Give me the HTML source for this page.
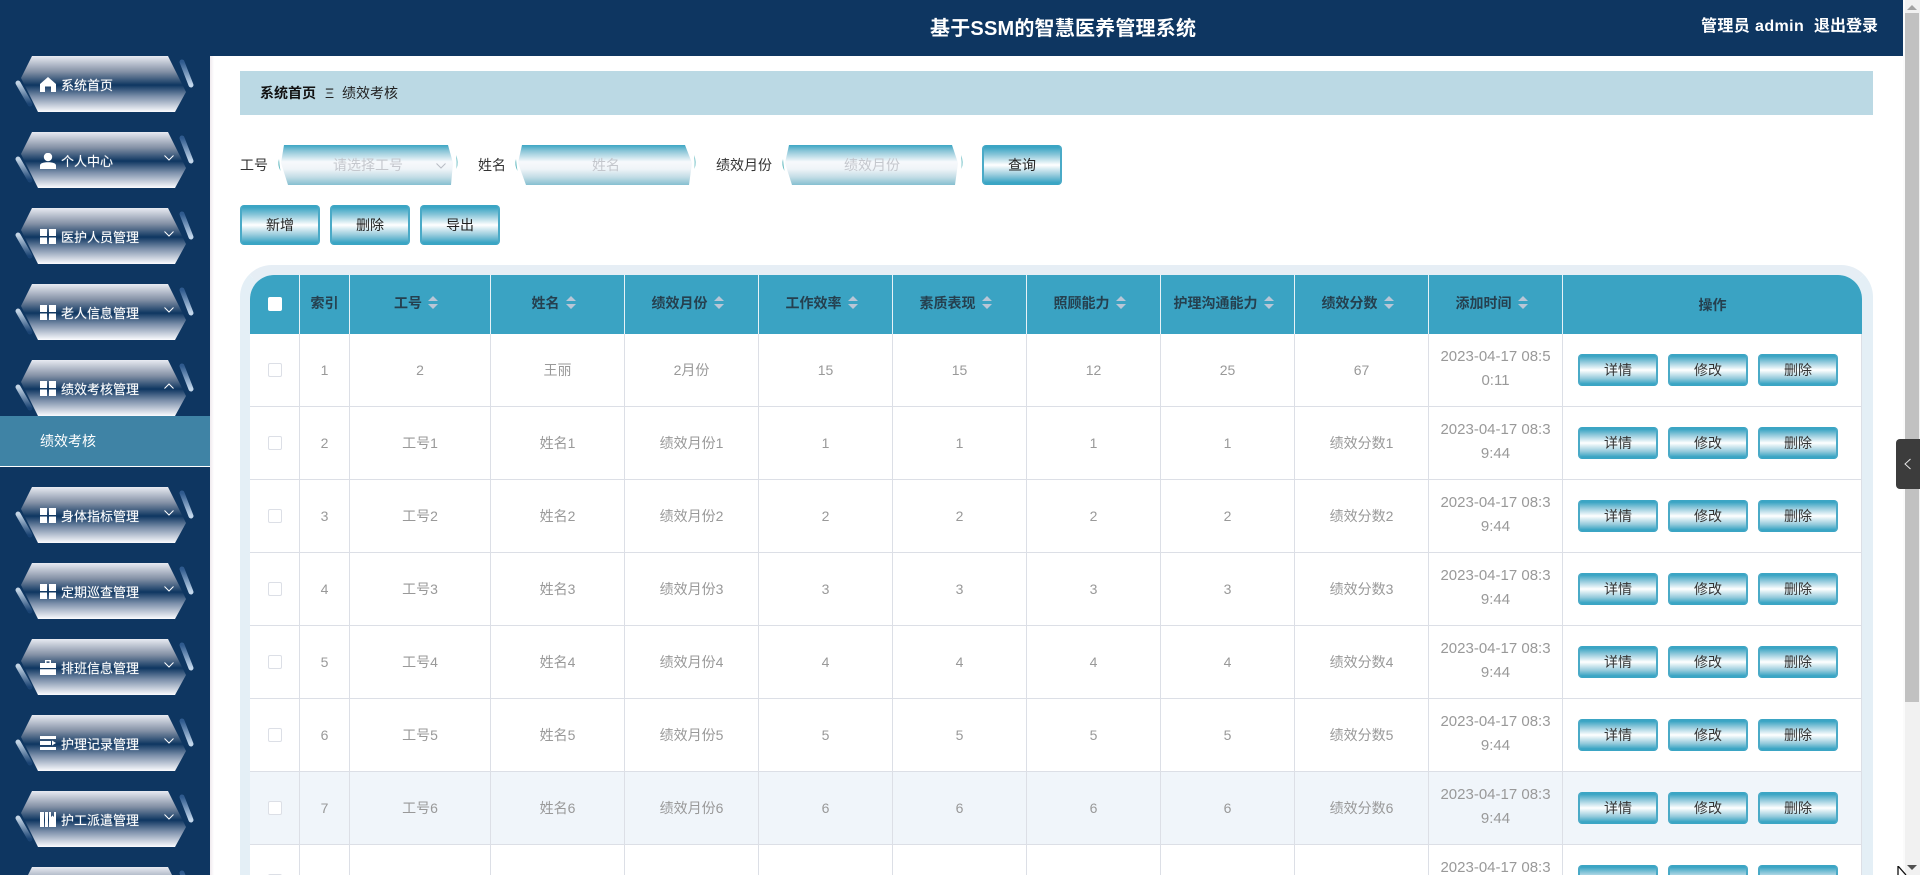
<!DOCTYPE html>
<html lang="zh-CN">
<head>
<meta charset="utf-8">
<title>基于SSM的智慧医养管理系统</title>
<style>
*{box-sizing:border-box;margin:0;padding:0}
html,body{width:1920px;height:875px;overflow:hidden;background:#fff}
body{position:relative;font-family:"Liberation Sans","Noto Sans CJK SC",sans-serif;font-size:14px;color:#333}
.abs{position:absolute}
#side{position:absolute;left:0;top:0;width:210px;height:875px;background:#0e3661;overflow:hidden}
#shadow{position:absolute;left:210px;top:56px;width:4px;height:819px;background:linear-gradient(90deg,#efe9ee,#fff)}
#head{position:absolute;left:0;top:0;width:1903px;height:56px;background:#0e3661}
#title{position:absolute;left:930px;top:14px;font-size:20px;line-height:30px;font-weight:bold;color:#fff;white-space:nowrap;letter-spacing:.2px}
#user{position:absolute;left:1701px;top:15px;font-size:16px;line-height:24px;font-weight:bold;color:#fff;white-space:nowrap;letter-spacing:.4px}
#logout{position:absolute;left:1814px;top:15px;font-size:16px;line-height:24px;font-weight:bold;color:#fff;white-space:nowrap}
.mi{position:absolute;left:0;width:210px;height:56px}
.mi svg.bg{position:absolute;left:0;top:0}
.mi .ic{position:absolute;left:40px;top:21px}
.mi .t{position:absolute;left:61px;top:20px;font-size:13px;line-height:20px;color:#fff;white-space:nowrap;text-shadow:0 0 1px rgba(255,255,255,.55)}
.mi .ch{position:absolute;left:164px;top:23px}
#sub{position:absolute;left:0;top:416px;width:210px;height:50px;background:#3f83a5;color:#fff;font-size:14px;line-height:51px;padding-left:40px}
#subl{position:absolute;left:0;top:466px;width:210px;height:1px;background:#fff}
#crumb{position:absolute;left:240px;top:71px;width:1633px;height:44px;background:#bbd9e4}
#crumb b{position:absolute;left:20px;top:12px;font-size:14px;line-height:20px;color:#111;white-space:nowrap}
#crumb i{position:absolute;left:85px;top:12px;font-style:normal;font-size:14px;line-height:20px;color:#222}
#crumb span{position:absolute;left:102px;top:12px;font-size:14px;line-height:20px;color:#222;white-space:nowrap}
.lab{position:absolute;top:155px;font-size:14px;line-height:20px;color:#333;white-space:nowrap}
.ph{position:absolute;top:155px;font-size:14px;line-height:20px;color:#c4c7cd;white-space:nowrap}
.btn{position:absolute;width:80px;border-left:2px solid #4aaac7;border-right:2px solid #4aaac7;background:linear-gradient(180deg,#3ba5c4 0%,#3ba5c4 6%,#8cc7da 25%,#fff 50%,#96cbdc 75%,#3ba5c4 94%,#3ba5c4 100%);border-radius:4px;text-align:center;color:#222;font-size:14px}
.b40{height:40px;line-height:40px;top:145px}
.b41{height:40px;line-height:40px;top:205px}
#wrap{position:absolute;left:240px;top:265px;width:1633px;height:610px;border-radius:32px 32px 0 0;border:10px solid #e4eff6;border-bottom:0;border-top-color:#e6eef5;background:#e4eff6;overflow:clip}
#tb{position:absolute;left:0;top:0;width:1612px;height:600px;background:#fff;border-radius:24px 24px 0 0;overflow:clip}
table{border-collapse:separate;border-spacing:0;table-layout:fixed;width:1612px}
th{height:59px;background:#3aa3c3;border-right:1px solid #e6f2f7;font-size:14px;font-weight:bold;color:#25404f;text-align:center;padding:0;vertical-align:middle}
th:last-child{border-right:0}
.up{position:relative;top:-2px}
td{height:73px;border-right:1px solid #dcdfe6;border-bottom:1px solid #dcdfe6;text-align:center;color:#999;font-size:14px;padding:0;vertical-align:middle}
td.d{font-size:15px;line-height:24px;white-space:nowrap;padding-bottom:2px}
tr.s td{background:#f0f5fa}
.cb{display:inline-block;width:14px;height:14px;border:1px solid #dcdfe6;border-radius:2px;background:#fff;vertical-align:middle;position:relative;top:-1px}
th .cb{border-color:#fff;top:-2px}
.srt{display:inline-flex;align-items:center;position:relative;left:-4px;top:-2px}
.srt svg{margin-left:6px}
.ops{text-align:left;position:relative}
.ops a{position:absolute;top:20px;width:80px;height:32px;line-height:32px;border-left:2px solid #4aaac7;border-right:2px solid #4aaac7;background:linear-gradient(180deg,#3ba5c4 0%,#3ba5c4 7%,#8cc7da 24%,#fff 50%,#96cbdc 76%,#3ba5c4 93%,#3ba5c4 100%);border-radius:4px;text-align:center;color:#333;font-size:14px}
.ops a:nth-child(1){left:15px}.ops a:nth-child(2){left:105px}.ops a:nth-child(3){left:195px}
#sbar{position:absolute;left:1903px;top:0;width:17px;height:875px;background:#f1f1f1;border-left:2px solid #fbfbfb}
#thumb{position:absolute;left:1905px;top:13px;width:14px;height:689px;background:#c1c1c1}
#tab{position:absolute;left:1896px;top:439px;width:24px;height:50px;background:#3c3c3c;border-radius:4px 0 0 4px}
</style>
</head>
<body>
<svg width="0" height="0" style="position:absolute">
<defs>
<linearGradient id="hex" x1="0" y1="0" x2="0" y2="1">
<stop offset="0" stop-color="#e8ebf2"/><stop offset=".28" stop-color="#8491a6"/><stop offset=".52" stop-color="#0e3661"/><stop offset=".72" stop-color="#7a8ea9"/><stop offset="1" stop-color="#fbfcfe"/>
</linearGradient>
<linearGradient id="ar" x1="0" y1="0" x2="0" y2="1"><stop offset="0" stop-color="#2f5a8e"/><stop offset="1" stop-color="#c4d8ec"/></linearGradient>
<linearGradient id="al" x1="0" y1="0" x2="0" y2="1"><stop offset="0" stop-color="#c4d5e6"/><stop offset="1" stop-color="#1a4373"/></linearGradient>
<linearGradient id="ig" x1="0" y1="0" x2="0" y2="1"><stop offset="0" stop-color="#3ca6c4"/><stop offset=".15" stop-color="#8cc6d8"/><stop offset=".42" stop-color="#f7f9fc"/><stop offset=".6" stop-color="#eff4f8"/><stop offset=".8" stop-color="#c4dde6"/><stop offset="1" stop-color="#85bfd0"/></linearGradient>
<symbol id="hexs" viewBox="0 0 210 56">
<path d="M32 0H168L186 36L175 56H38L21 22Z" fill="url(#hex)"/>
<path d="M182 6L191 29" stroke="url(#ar)" stroke-width="5" stroke-linecap="round" fill="none"/>
<path d="M18 27L30 48" stroke="url(#al)" stroke-width="5" stroke-linecap="round" fill="none"/>
</symbol>
<symbol id="down" viewBox="0 0 10 6"><path d="M.5.5L5 5L9.5.5" fill="none" stroke="#fff" stroke-width="1"/></symbol>
<symbol id="grid" viewBox="0 0 16 15"><path d="M0 0H7V7H0ZM9 0H16V7H9ZM0 8.500H7V15H0ZM9 8.500H16V15H9Z" fill="#fff"/></symbol>
<symbol id="srt" viewBox="0 0 10 13"><path d="M5 0L10 5H0ZM0 8H10L5 13Z" fill="#b9c6d6"/></symbol>
</defs>
</svg>

<div id="head"></div>
<div id="side"></div>
<div id="shadow"></div>
<div id="title">基于SSM的智慧医养管理系统</div>
<div id="user">管理员 admin</div>
<div id="logout">退出登录</div>

<div class="mi" style="top:56px"><svg class="bg" width="210" height="56"><use href="#hexs"/></svg>
<svg class="ic" width="16" height="15" viewBox="0 0 16 15"><path d="M8 0L16 7V15H11V9.500H5V15H0V7Z" fill="#fff"/></svg><span class="t">系统首页</span></div>

<div class="mi" style="top:132px"><svg class="bg" width="210" height="56"><use href="#hexs"/></svg>
<svg class="ic" width="16" height="16" viewBox="0 0 16 16"><circle cx="8" cy="4" r="4.200" fill="#fff"/><path d="M0 16V12.500C0 10.500 3 9.300 8 9.300S16 10.500 16 12.500V16Z" fill="#fff"/></svg><span class="t">个人中心</span><svg class="ch" width="10" height="6"><use href="#down"/></svg></div>

<div class="mi" style="top:208px"><svg class="bg" width="210" height="56"><use href="#hexs"/></svg>
<svg class="ic" width="16" height="15"><use href="#grid"/></svg><span class="t">医护人员管理</span><svg class="ch" width="10" height="6"><use href="#down"/></svg></div>

<div class="mi" style="top:284px"><svg class="bg" width="210" height="56"><use href="#hexs"/></svg>
<svg class="ic" width="16" height="15"><use href="#grid"/></svg><span class="t">老人信息管理</span><svg class="ch" width="10" height="6"><use href="#down"/></svg></div>

<div class="mi" style="top:360px"><svg class="bg" width="210" height="56"><use href="#hexs"/></svg>
<svg class="ic" width="16" height="15"><use href="#grid"/></svg><span class="t">绩效考核管理</span><svg class="ch" width="10" height="6" style="transform:scaleY(-1)"><use href="#down"/></svg></div>

<div id="sub">绩效考核</div>
<div id="subl"></div>

<div class="mi" style="top:487px"><svg class="bg" width="210" height="56"><use href="#hexs"/></svg>
<svg class="ic" width="16" height="15"><use href="#grid"/></svg><span class="t">身体指标管理</span><svg class="ch" width="10" height="6"><use href="#down"/></svg></div>

<div class="mi" style="top:563px"><svg class="bg" width="210" height="56"><use href="#hexs"/></svg>
<svg class="ic" width="16" height="15"><use href="#grid"/></svg><span class="t">定期巡查管理</span><svg class="ch" width="10" height="6"><use href="#down"/></svg></div>

<div class="mi" style="top:639px"><svg class="bg" width="210" height="56"><use href="#hexs"/></svg>
<svg class="ic" width="16" height="15" viewBox="0 0 16 15"><path d="M5 0H11V3H16V8H0V3H5ZM6.500 1.300V3H9.500V1.300ZM0 9.300H16V15H0Z" fill="#fff"/></svg><span class="t">排班信息管理</span><svg class="ch" width="10" height="6"><use href="#down"/></svg></div>

<div class="mi" style="top:715px"><svg class="bg" width="210" height="56"><use href="#hexs"/></svg>
<svg class="ic" width="16" height="14" viewBox="0 0 16 14"><path d="M0 0H16V3H0ZM0 5H11V9H0ZM12 4.500L16 7L12 9.500ZM0 11H16V14H0Z" fill="#fff"/></svg><span class="t">护理记录管理</span><svg class="ch" width="10" height="6"><use href="#down"/></svg></div>

<div class="mi" style="top:791px"><svg class="bg" width="210" height="56"><use href="#hexs"/></svg>
<svg class="ic" width="16" height="15" viewBox="0 0 16 15"><path d="M0 0H4V15H0ZM5 0H8V15H5ZM9 0H11V5L12.500 3.500L14 5V0H16V15H9Z" fill="#fff"/></svg><span class="t">护工派遣管理</span><svg class="ch" width="10" height="6"><use href="#down"/></svg></div>

<div class="mi" style="top:867px;height:8px;overflow:clip"><svg class="bg" width="210" height="56"><use href="#hexs"/></svg></div>

<div id="crumb"><b>系统首页</b><i>Ξ</i><span>绩效考核</span></div>

<div class="lab" style="left:240px">工号</div>
<svg class="abs" style="left:275px;top:145px" width="190" height="40" viewBox="0 0 190 40">
<path d="M9 0H173L178 18L176 40H13L6 18Z" fill="url(#ig)"/>
<path d="M4 14Q2 20 5.500 26Q4.500 20 4 14Z" fill="#6fbfc5"/>
<path d="M181 10Q184 17 181.500 24Q182 17 181 10Z" fill="#6fbfc5"/>
</svg>
<div class="ph" style="left:333px">请选择工号</div>
<svg class="abs" style="left:436px;top:163px" width="10" height="6"><path d="M.5.5L5 5L9.500.5" fill="none" stroke="#b8bcc4"/></svg>

<div class="lab" style="left:478px">姓名</div>
<svg class="abs" style="left:513px;top:145px" width="190" height="40" viewBox="0 0 190 40">
<path d="M9 0H172L179 18L176 40H13L5 18Z" fill="url(#ig)"/>
<path d="M3 14Q1 20 4.500 26Q3.500 20 3 14Z" fill="#6fbfc5"/>
<path d="M181 10Q184 17 181.500 24Q182 17 181 10Z" fill="#6fbfc5"/>
</svg>
<div class="ph" style="left:592px">姓名</div>

<div class="lab" style="left:716px">绩效月份</div>
<svg class="abs" style="left:780px;top:145px" width="190" height="40" viewBox="0 0 190 40">
<path d="M9 0H172L178 18L175 40H12L5 18Z" fill="url(#ig)"/>
<path d="M3 14Q1 20 4.500 26Q3.500 20 3 14Z" fill="#6fbfc5"/>
<path d="M181 10Q184 17 181.500 24Q182 17 181 10Z" fill="#6fbfc5"/>
</svg>
<div class="ph" style="left:844px">绩效月份</div>

<div class="btn b40" style="left:982px">查询</div>
<div class="btn b41" style="left:240px">新增</div>
<div class="btn b41" style="left:330px">删除</div>
<div class="btn b41" style="left:420px">导出</div>

<div id="wrap"><div id="tb">
<table>
<colgroup><col style="width:50px"><col style="width:50px"><col style="width:141px"><col style="width:134px"><col style="width:134px"><col style="width:134px"><col style="width:134px"><col style="width:134px"><col style="width:134px"><col style="width:134px"><col style="width:134px"><col style="width:299px"></colgroup>
<thead><tr>
<th><span class="cb"></span></th><th><span class="up">索引</span></th>
<th><span class="srt">工号<svg width="10" height="13"><use href="#srt"/></svg></span></th>
<th><span class="srt">姓名<svg width="10" height="13"><use href="#srt"/></svg></span></th>
<th><span class="srt">绩效月份<svg width="10" height="13"><use href="#srt"/></svg></span></th>
<th><span class="srt">工作效率<svg width="10" height="13"><use href="#srt"/></svg></span></th>
<th><span class="srt">素质表现<svg width="10" height="13"><use href="#srt"/></svg></span></th>
<th><span class="srt">照顾能力<svg width="10" height="13"><use href="#srt"/></svg></span></th>
<th><span class="srt">护理沟通能力<svg width="10" height="13"><use href="#srt"/></svg></span></th>
<th><span class="srt">绩效分数<svg width="10" height="13"><use href="#srt"/></svg></span></th>
<th><span class="srt">添加时间<svg width="10" height="13"><use href="#srt"/></svg></span></th>
<th>操作</th>
</tr></thead>
<tbody>
<tr><td><span class="cb"></span></td><td>1</td><td>2</td><td>王丽</td><td>2月份</td><td>15</td><td>15</td><td>12</td><td>25</td><td>67</td><td class="d">2023-04-17 08:5<br>0:11</td><td class="ops"><a>详情</a><a>修改</a><a>删除</a></td></tr>
<tr><td><span class="cb"></span></td><td>2</td><td>工号1</td><td>姓名1</td><td>绩效月份1</td><td>1</td><td>1</td><td>1</td><td>1</td><td>绩效分数1</td><td class="d">2023-04-17 08:3<br>9:44</td><td class="ops"><a>详情</a><a>修改</a><a>删除</a></td></tr>
<tr><td><span class="cb"></span></td><td>3</td><td>工号2</td><td>姓名2</td><td>绩效月份2</td><td>2</td><td>2</td><td>2</td><td>2</td><td>绩效分数2</td><td class="d">2023-04-17 08:3<br>9:44</td><td class="ops"><a>详情</a><a>修改</a><a>删除</a></td></tr>
<tr><td><span class="cb"></span></td><td>4</td><td>工号3</td><td>姓名3</td><td>绩效月份3</td><td>3</td><td>3</td><td>3</td><td>3</td><td>绩效分数3</td><td class="d">2023-04-17 08:3<br>9:44</td><td class="ops"><a>详情</a><a>修改</a><a>删除</a></td></tr>
<tr><td><span class="cb"></span></td><td>5</td><td>工号4</td><td>姓名4</td><td>绩效月份4</td><td>4</td><td>4</td><td>4</td><td>4</td><td>绩效分数4</td><td class="d">2023-04-17 08:3<br>9:44</td><td class="ops"><a>详情</a><a>修改</a><a>删除</a></td></tr>
<tr><td><span class="cb"></span></td><td>6</td><td>工号5</td><td>姓名5</td><td>绩效月份5</td><td>5</td><td>5</td><td>5</td><td>5</td><td>绩效分数5</td><td class="d">2023-04-17 08:3<br>9:44</td><td class="ops"><a>详情</a><a>修改</a><a>删除</a></td></tr>
<tr class="s"><td><span class="cb"></span></td><td>7</td><td>工号6</td><td>姓名6</td><td>绩效月份6</td><td>6</td><td>6</td><td>6</td><td>6</td><td>绩效分数6</td><td class="d">2023-04-17 08:3<br>9:44</td><td class="ops"><a>详情</a><a>修改</a><a>删除</a></td></tr>
<tr><td><span class="cb"></span></td><td></td><td></td><td></td><td></td><td></td><td></td><td></td><td></td><td></td><td class="d">2023-04-17 08:3<br>9:44</td><td class="ops"><a></a><a></a><a></a></td></tr>
</tbody>
</table>
</div></div>

<div id="sbar"></div>
<div id="thumb"></div>
<svg class="abs" style="left:1906px;top:4px" width="12" height="7"><path d="M6 1L11 6H1Z" fill="#a3a3a3"/></svg>
<svg class="abs" style="left:1906px;top:864px" width="12" height="7"><path d="M1 1H11L6 6Z" fill="#505050"/></svg>
<div id="tab"><svg class="abs" style="left:8px;top:19px" width="8" height="12"><path d="M6.500 1L1 6L6.500 11" fill="none" stroke="#e8e8e8"/></svg></div>
<svg class="abs" style="left:1897px;top:866px" width="10" height="9"><path d="M1 0V9M1 0L9 9" stroke="#111" stroke-width="1.300" fill="none"/></svg>
</body>
</html>
